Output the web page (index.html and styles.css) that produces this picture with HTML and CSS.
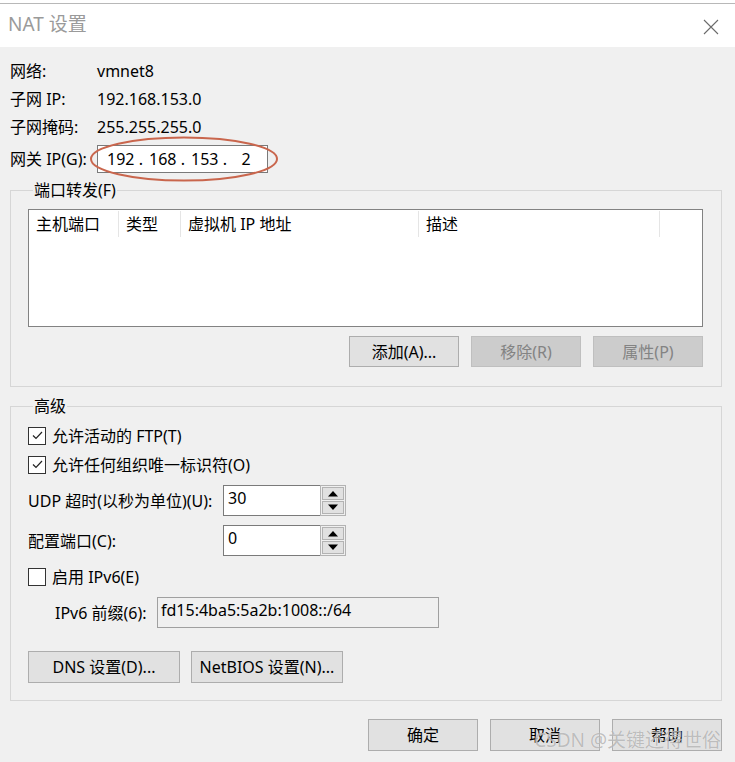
FILE: index.html
```html
<!DOCTYPE html>
<html lang="zh-CN">
<head>
<meta charset="utf-8">
<title>NAT 设置</title>
<link rel="stylesheet" href="styles.css">
</head>
<body>
<div class="dialog">
  <div class="titlebar">
    <div class="topstrip"></div>
    <div class="titlerow">
      <span class="title">NAT 设置</span>
      <svg class="close" width="16" height="16" viewBox="0 0 16 16"><path d="M1 1 L15 15 M15 1 L1 15" stroke="#6b6b6b" stroke-width="1.1" fill="none"/></svg>
    </div>
  </div>
  <div class="content">
    <div class="info">
      <div class="inforow"><span class="ilabel">网络:</span><span>vmnet8</span></div>
      <div class="inforow"><span class="ilabel">子网 IP:</span><span>192.168.153.0</span></div>
      <div class="inforow"><span class="ilabel">子网掩码:</span><span>255.255.255.0</span></div>
      <div class="inforow gwrow">
        <span class="ilabel">网关 IP(G):</span>
        <div class="ipbox">
          <span class="oct">192</span><span class="dot">.</span><span class="oct">168</span><span class="dot">.</span><span class="oct">153</span><span class="dot">.</span><span class="oct">2</span>
        </div>
        <svg class="ellipse" width="192" height="48" viewBox="0 0 192 48"><ellipse cx="96" cy="24" rx="93" ry="21.5" fill="none" stroke="#c9664d" stroke-width="2"/></svg>
      </div>
    </div>

    <fieldset class="group g1">
      <legend>端口转发(F)</legend>
      <div class="listbox">
        <div class="lhead">
          <span class="col c1">主机端口</span>
          <span class="col c2">类型</span>
          <span class="col c3">虚拟机 IP 地址</span>
          <span class="col c4">描述</span>
        </div>
      </div>
      <div class="btnrow right">
        <button class="btn w110">添加(A)...</button>
        <button class="btn w110 disabled">移除(R)</button>
        <button class="btn w110 disabled">属性(P)</button>
      </div>
    </fieldset>

    <fieldset class="group g2">
      <legend>高级</legend>
      <div class="check"><span class="box"><svg width="15" height="15" viewBox="0 0 15 15"><path d="M3 7.5 L6 10.5 L12 4" stroke="#222" stroke-width="1.2" fill="none"/></svg></span><span>允许活动的 FTP(T)</span></div>
      <div class="check"><span class="box"><svg width="15" height="15" viewBox="0 0 15 15"><path d="M3 7.5 L6 10.5 L12 4" stroke="#222" stroke-width="1.2" fill="none"/></svg></span><span>允许任何组织唯一标识符(O)</span></div>
      <div class="field f-udp">
        <span class="flabel">UDP 超时(以秒为单位)(U):</span>
        <div class="spin">
          <div class="sinput">30</div>
          <div class="sbtns">
            <div class="sbtn"><svg width="12" height="7" viewBox="0 0 12 7"><path d="M1 6.5 L6 1 L11 6.5 Z" fill="#000"/></svg></div>
            <div class="sbtn"><svg width="12" height="7" viewBox="0 0 12 7"><path d="M1 0.5 L6 6 L11 0.5 Z" fill="#000"/></svg></div>
          </div>
        </div>
      </div>
      <div class="field f-cfg">
        <span class="flabel">配置端口(C):</span>
        <div class="spin">
          <div class="sinput">0</div>
          <div class="sbtns">
            <div class="sbtn"><svg width="12" height="7" viewBox="0 0 12 7"><path d="M1 6.5 L6 1 L11 6.5 Z" fill="#000"/></svg></div>
            <div class="sbtn"><svg width="12" height="7" viewBox="0 0 12 7"><path d="M1 0.5 L6 6 L11 0.5 Z" fill="#000"/></svg></div>
          </div>
        </div>
      </div>
      <div class="check c3row"><span class="box"></span><span>启用 IPv6(E)</span></div>
      <div class="field f-v6">
        <span class="flabel v6label">IPv6 前缀(6):</span>
        <div class="v6input">fd15:4ba5:5a2b:1008::/64</div>
      </div>
      <div class="btnrow left">
        <button class="btn w152">DNS 设置(D)...</button>
        <button class="btn w152">NetBIOS 设置(N)...</button>
      </div>
    </fieldset>

    <div class="btnrow bottom">
      <button class="btn w110">确定</button>
      <button class="btn w110">取消</button>
      <button class="btn w110">帮助</button>
      <span class="watermark">CSDN @关键还得世俗</span>
    </div>
  </div>
</div>
</body>
</html>
```
FILE: styles.css
```css
* { box-sizing: border-box; }
html, body { margin: 0; padding: 0; }
body {
  width: 735px;
  height: 762px;
  overflow: hidden;
  background: #f0f0f0;
  font-family: "Noto Sans", "Noto Sans CJK SC", sans-serif;
  font-size: 16px;
  color: #000;
}
.dialog { width: 735px; height: 762px; background: #f0f0f0; }

.titlebar { background: #fff; height: 47px; }
.topstrip { height: 4px; border-bottom: 1px solid #b8b8b8; background: #fff; }
.titlerow {
  display: flex;
  align-items: center;
  justify-content: space-between;
  height: 42px;
  padding: 0 16px 0 8px;
}
.title { font-size: 19px; color: #9a9a9a; line-height: 22px; margin-top: -3px; }
.close { margin-top: 3px; }

.content { padding: 0 13px 0 10px; }

.info { padding-top: 10px; }
.inforow {
  display: flex;
  align-items: center;
  height: 28px;
  line-height: 20px;
}
.ilabel { width: 87px; flex: none; }
.gwrow { position: relative; margin-top: 4px; height: 28px; }
.ipbox {
  width: 171px;
  height: 28px;
  background: #fff;
  border: 1px solid #7a7a7a;
  display: flex;
  align-items: center;
  padding-left: 9px;
  font-size: 16px;
}
.oct { width: 26px; text-align: center; }
.dot { width: 16px; text-align: center; }
.ellipse { position: absolute; left: 78px; top: -10px; }

.group {
  margin: 0;
  border: 1px solid #d6d6d6;
  padding: 0 18px 0 17px;
  min-width: 0;
}
.group legend {
  padding: 0 1px;
  margin-left: 5px;
  line-height: 18px;
  font-size: 16px;
}
.g1 { margin-top: 8px; padding-top: 10px; padding-bottom: 19px; }
.g2 { margin-top: 10px; padding-top: 6px; padding-bottom: 17px; }

.listbox {
  height: 118px;
  background: #fff;
  border: 1px solid #828282;
}
.lhead { display: flex; height: 26px; align-items: stretch; margin-top: 1px; }
.col {
  display: flex;
  align-items: center;
  padding-left: 7px;
  border-right: 1px solid #e5e5e5;
  line-height: 18px;
}
.c1 { width: 90px; }
.c2 { width: 62px; }
.c3 { width: 238px; }
.c4 { width: 241px; }

.btnrow { display: flex; gap: 12px; }
.btnrow.right { justify-content: flex-end; margin-top: 9px; }
.btnrow.left { margin-top: 23px; gap: 11px; }
.btnrow.bottom { justify-content: flex-end; margin-top: 18px; margin-right: 0; position: relative; }

.btn {
  height: 31px;
  background: #e1e1e1;
  border: 1px solid #adadad;
  font-family: "Noto Sans", "Noto Sans CJK SC", sans-serif;
  font-size: 16px;
  color: #000;
  padding: 0;
  line-height: 18px;
}
.btn.disabled { background: #cccccc; border-color: #bfbfbf; color: #838383; }
.w110 { width: 110px; }
.w152 { width: 152px; height: 32px; }
.bottom .btn { height: 32px; }

.check {
  display: flex;
  align-items: center;
  height: 29px;
  gap: 6px;
  line-height: 20px;
}
.box {
  width: 18px;
  height: 18px;
  border: 1px solid #333;
  background: #fff;
  display: flex;
  align-items: center;
  justify-content: center;
}
.c3row { margin-top: 6px; }

.field { display: flex; align-items: center; height: 31px; }
.f-udp { margin-top: 6px; }
.f-cfg { margin-top: 9px; }
.f-v6 { margin-top: 6px; }
.flabel { width: 195px; flex: none; line-height: 20px; }
.v6label { width: 129px; padding-left: 27px; }

.spin { display: flex; height: 31px; }
.sinput {
  width: 97px;
  height: 31px;
  background: #fff;
  border: 1px solid #7a7a7a;
  border-right: none;
  padding: 2px 0 0 4px;
  line-height: 20px;
  font-size: 16px;
}
.sbtns {
  width: 26px;
  height: 31px;
  border: 1px solid #b3b3b3;
  background: #f0f0f0;
  display: flex;
  flex-direction: column;
  justify-content: space-between;
  padding: 1px;
}
.sbtn {
  height: 13px;
  background: #e1e1e1;
  border: 1px solid #b3b3b3;
  display: flex;
  align-items: center;
  justify-content: center;
}

.v6input {
  width: 282px;
  height: 31px;
  border: 1px solid #a0a0a0;
  background: #f0f0f0;
  padding: 2px 0 0 3px;
  line-height: 20px;
  font-size: 16px;
}

.watermark {
  position: absolute;
  right: 1px;
  top: 9px;
  font-size: 19px;
  line-height: 24px;
  color: rgba(140, 140, 140, 0.55);
  text-shadow: 0 0 1px rgba(255,255,255,0.8);
  pointer-events: none;
  white-space: nowrap;
}
```
